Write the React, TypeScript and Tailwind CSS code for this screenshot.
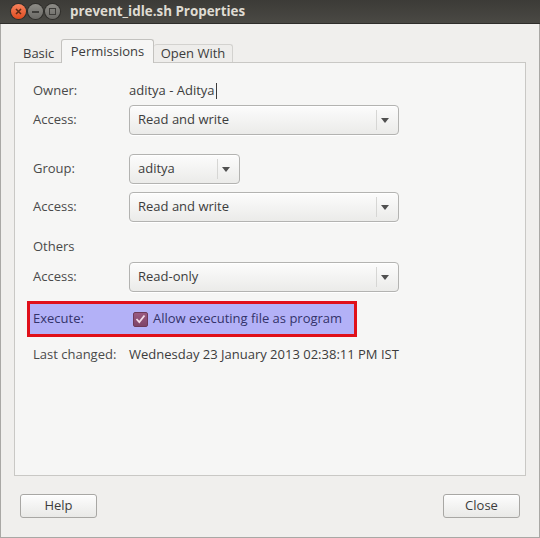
import React from "react";

const font = { fontFamily: '"Open Sans", "Noto Sans", sans-serif' };

function Tri() {
  return (
    <svg width="8" height="5" viewBox="0 0 8 5">
      <path d="M0 0 H8 L4 5 Z" fill="#505050" />
    </svg>
  );
}

function Combo({ text, w }: { text: string; w: string }) {
  return (
    <div
      className={`flex h-[30px] items-center rounded-[4px] border border-[#b3b3b1] bg-gradient-to-b from-[#fcfcfc] to-[#ebebe9] shadow-[inset_0_1px_0_#ffffff,0_1px_0_#ffffff] ${w}`}
    >
      <span className="flex-1 pl-[8px] text-[#3c3c3c]">{text}</span>
      <span className="h-[20px] w-px bg-[#d6d6d4]" />
      <span className="flex w-[21px] justify-center pr-[6px] pl-[1px]">
        <Tri />
      </span>
    </div>
  );
}

function Label({ children }: { children: React.ReactNode }) {
  return <div className="w-[96px] shrink-0 text-[#4a4a4a]">{children}</div>;
}

export default function App() {
  return (
    <div
      className="flex h-[538px] w-[540px] flex-col overflow-hidden bg-[#f0efed] text-[13px]"
      style={font}
    >
      {/* title bar */}
      <div className="flex h-[24px] shrink-0 items-center border-b border-[#2e2d2a] bg-gradient-to-b from-[#3c3b37] to-[#4a4944]">
        <div className="ml-[11px] flex items-center gap-[2px]">
          <div className="flex h-[15px] w-[15px] items-center justify-center rounded-full bg-gradient-to-b from-[#f7825c] to-[#df4a1b] shadow-[0_0_0_1px_#2f2e2b]">
            <svg width="7" height="7" viewBox="0 0 7 7">
              <path d="M1 1 L6 6 M6 1 L1 6" stroke="#5a2a14" strokeWidth="1.6" />
            </svg>
          </div>
          <div className="flex h-[15px] w-[15px] items-center justify-center rounded-full bg-gradient-to-b from-[#8d8c87] to-[#6b6a66] shadow-[0_0_0_1px_#2f2e2b]">
            <div className="h-[2px] w-[7px] bg-[#3e3d3a]" />
          </div>
          <div className="flex h-[15px] w-[15px] items-center justify-center rounded-full bg-gradient-to-b from-[#8d8c87] to-[#6b6a66] shadow-[0_0_0_1px_#2f2e2b]">
            <div className="h-[7px] w-[7px] border-[1.5px] border-[#3e3d3a]" />
          </div>
        </div>
        <div className="ml-[10px] text-[13.4px] font-bold text-[#dfdbd2]">
          prevent_idle.sh Properties
        </div>
      </div>

      <div className="flex flex-1 flex-col border-x border-b border-[#a9a8a5]">
        {/* tabs */}
        <div className="ml-[13px] mt-[14px] flex h-[24px] items-end">
          <div className="flex h-[18px] w-[47px] items-center border-x border-t border-transparent pl-[8px] text-[#3c3c3c]">
            Basic
          </div>
          <div className="relative z-10 -mb-px flex h-[24px] w-[93px] items-center justify-center rounded-t-[3px] border-x border-t border-[#c3c2bf] bg-[#f6f6f5] text-[#3c3c3c]">
            Permissions
          </div>
          <div className="flex h-[18px] w-[79px] items-center justify-center rounded-t-[3px] border-r border-t border-[#d3d2cf] bg-[#eeedeb] text-[#3c3c3c]">
            Open With
          </div>
        </div>

        {/* panel */}
        <div className="mx-[13px] flex h-[414px] flex-col border border-[#c9c8c5] bg-[#f6f6f5] pl-[18px] pt-[17px] text-[#3c3c3c]">
          <div className="flex h-[22px] items-center">
            <Label>Owner:</Label>
            <div className="flex items-center">
              aditya - Aditya
              <span className="ml-px h-[16px] w-px bg-[#3c3c3c]" />
            </div>
          </div>
          <div className="mt-[3px] flex items-center">
            <Label>Access:</Label>
            <Combo text="Read and write" w="w-[270px]" />
          </div>
          <div className="mt-[19px] flex items-center">
            <Label>Group:</Label>
            <Combo text="aditya" w="w-[111px]" />
          </div>
          <div className="mt-[8px] flex items-center">
            <Label>Access:</Label>
            <Combo text="Read and write" w="w-[270px]" />
          </div>
          <div className="mt-[15px] flex h-[20px] items-center">
            <Label>Others</Label>
          </div>
          <div className="mt-[5px] flex items-center">
            <Label>Access:</Label>
            <Combo text="Read-only" w="w-[270px]" />
          </div>
          <div className="-ml-[6px] mt-[9px] flex h-[36px] w-[330px] items-center border-[3px] border-[#e0101a] bg-[#b3b1f7] pl-[3px] text-[#34336a]">
            <div className="w-[100px] shrink-0">Execute:</div>
            <div className="flex items-center whitespace-nowrap">
              <div className="flex h-[15px] w-[15px] items-center justify-center rounded-[2px] border border-[#6e3a58] bg-gradient-to-b from-[#9a5a80] to-[#7f4468]">
                <svg width="11" height="10" viewBox="0 0 11 10">
                  <path d="M1.5 5 L4.3 8 L9.5 1.5" stroke="#f3dde8" strokeWidth="1.8" fill="none" />
                </svg>
              </div>
              <span className="ml-[5px]">Allow executing file as program</span>
            </div>
          </div>
          <div className="mt-[8px] flex h-[20px] items-center">
            <Label>Last changed:</Label>
            <div>Wednesday 23 January 2013 02:38:11 PM IST</div>
          </div>
        </div>

        {/* buttons */}
        <div className="mt-[18px] flex justify-between pl-[19px] pr-[19px]">
          <div className="flex h-[24px] w-[77px] items-center justify-center rounded-[3px] border border-[#a8a7a4] bg-gradient-to-b from-[#fdfdfd] to-[#e9e9e7] text-[#3c3c3c] shadow-[inset_0_1px_0_#fff]">
            Help
          </div>
          <div className="flex h-[24px] w-[77px] items-center justify-center rounded-[3px] border border-[#a8a7a4] bg-gradient-to-b from-[#fdfdfd] to-[#e9e9e7] text-[#3c3c3c] shadow-[inset_0_1px_0_#fff]">
            Close
          </div>
        </div>
      </div>
    </div>
  );
}
